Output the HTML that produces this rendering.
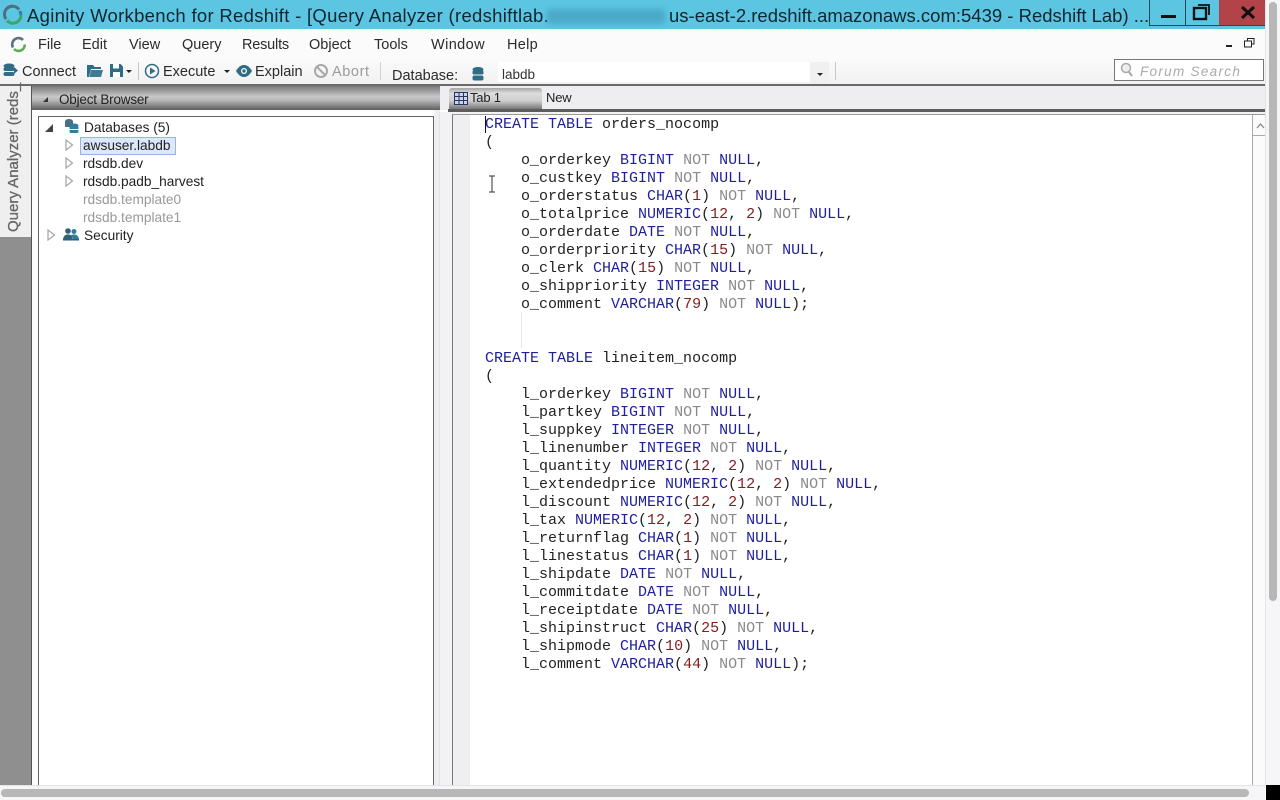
<!DOCTYPE html>
<html><head><meta charset="utf-8">
<style>
html,body{margin:0;padding:0;width:1280px;height:800px;overflow:hidden;background:#fff}
body{position:relative;font-family:"Liberation Sans",sans-serif;color:#222}
.a{position:absolute}
.t{position:absolute;white-space:nowrap;line-height:18px}
.m{font-size:14.5px;color:#2b2b2b}
pre{position:absolute;left:485px;top:116px;margin:0;font:15px/18px "Liberation Mono",monospace;color:#222}
b{font-weight:normal;color:#1f1f9c}
i{font-style:normal;color:#8a8a8a}
u{text-decoration:none;color:#802020}
.tr{font-size:13.7px;color:#222}
.g{color:#999}
</style></head><body>
<!-- title bar -->
<div class="a" style="left:0;top:0;width:1280px;height:29px;background:#5cc6e2"></div>
<svg class="a" style="left:2px;top:4px" width="22" height="22" viewBox="0 0 22 22"><path d="M4 15A8 8 0 0 1 17 5.500" fill="none" stroke="#4f6f7c" stroke-width="3"/><path d="M5 16.500A8 8 0 0 0 19 11" fill="none" stroke="#3aa66a" stroke-width="3"/><path d="M18 7L19 11" stroke="#2d7fa5" stroke-width="3"/></svg>
<div class="t" style="left:27px;top:5px;font-size:18.500px;line-height:22px;color:#102530;letter-spacing:.3px">Aginity Workbench for Redshift - [Query Analyzer (redshiftlab.</div>
<div class="a" style="left:547px;top:9px;width:118px;height:15px;background:#4aa9c8;filter:blur(3px)"></div>
<div class="t" style="left:669px;top:5px;font-size:18.500px;line-height:22px;color:#102530">us-east-2.redshift.amazonaws.com:5439 - Redshift Lab) ...</div>
<div class="a" style="left:1149px;top:0;width:1px;height:25px;background:#1e4a5a"></div>
<div class="a" style="left:1185px;top:0;width:1px;height:25px;background:#1e4a5a"></div>
<div class="a" style="left:1219px;top:0;width:46px;height:25px;background:#b24349"></div>
<div class="a" style="left:1149px;top:25px;width:116px;height:1px;background:#1e4a5a"></div>
<div class="a" style="left:1161px;top:15px;width:15px;height:3px;background:#111"></div>
<svg class="a" style="left:1192px;top:3px" width="20" height="18" viewBox="0 0 20 18"><rect x="2" y="5" width="12" height="11" fill="none" stroke="#111" stroke-width="2.400"/><path d="M6 2H17V12" fill="none" stroke="#111" stroke-width="1.800"/></svg>
<svg class="a" style="left:1240px;top:5px" width="16" height="15" viewBox="0 0 16 15"><path d="M2 2L14 13M14 2L2 13" stroke="#111" stroke-width="3"/></svg>
<!-- menu -->
<div class="a" style="left:0;top:29px;width:1265px;height:29px;background:#fbfbfb"></div>
<svg class="a" style="left:10px;top:36px" width="17" height="17" viewBox="0 0 17 17"><path d="M3 11.500A6.300 6.300 0 0 1 13 4" fill="none" stroke="#5a7580" stroke-width="2.600"/><path d="M4 13A6.300 6.300 0 0 0 14.800 8.500" fill="none" stroke="#55b04a" stroke-width="2.600"/></svg>
<div class="t m" style="left:38px;top:36px">File</div>
<div class="t m" style="left:82px;top:36px">Edit</div>
<div class="t m" style="left:129px;top:36px">View</div>
<div class="t m" style="left:182px;top:36px">Query</div>
<div class="t m" style="left:242px;top:36px;letter-spacing:-.2px">Results</div>
<div class="t m" style="left:309px;top:36px">Object</div>
<div class="t m" style="left:374px;top:36px">Tools</div>
<div class="t m" style="left:431px;top:36px;letter-spacing:.4px">Window</div>
<div class="t m" style="left:507px;top:36px;letter-spacing:.3px">Help</div>
<div class="a" style="left:1226px;top:45px;width:6px;height:2px;background:#222"></div>
<svg class="a" style="left:1244px;top:38px" width="11" height="10" viewBox="0 0 11 10"><path d="M3.500 2.500V.5H10V6H8M.5 3H7.500V9H.5Z" fill="none" stroke="#222" stroke-width="1"/></svg>
<!-- toolbar -->
<div class="a" style="left:0;top:58px;width:1265px;height:26px;background:linear-gradient(#fbfbfb,#f1f1f1)"></div>
<svg class="a" style="left:3px;top:63px" width="16" height="15" viewBox="0 0 16 15"><ellipse cx="6" cy="3" rx="5.500" ry="2.500" fill="#2f6d86"/><rect x=".5" y="4.500" width="11" height="3.500" rx="1.500" fill="#2f6d86"/><rect x=".5" y="9" width="11" height="4" rx="2" fill="#2f6d86"/><path d="M11 4L15 7.500L11 11Z" fill="#2f6d86"/></svg>
<div class="t m" style="left:22px;top:63px">Connect</div>
<svg class="a" style="left:87px;top:64px" width="16" height="13" viewBox="0 0 16 13"><path d="M0 1H6L7.500 3H14V5H4L2 13H0Z" fill="#2f6d86"/><path d="M4 6H16L14 13H2.500Z" fill="#3c7b94"/></svg>
<svg class="a" style="left:110px;top:64px" width="13" height="13" viewBox="0 0 13 13"><path d="M0 0H10.500L13 2.500V13H0Z" fill="#2f6d86"/><rect x="3" y="0" width="6" height="4.500" fill="#fff"/><rect x="3" y="8" width="7" height="5" fill="#fff"/></svg>
<div class="a" style="left:126px;top:70px;border:3px solid transparent;border-top:3px solid #222"></div>
<div class="a" style="left:138px;top:62px;width:1px;height:18px;background:#c8c8c8"></div>
<svg class="a" style="left:144px;top:63px" width="16" height="16" viewBox="0 0 16 16"><circle cx="8" cy="8" r="6.500" fill="none" stroke="#2f6d86" stroke-width="1.500"/><path d="M6 4.500L11.500 8L6 11.500Z" fill="#2f6d86"/></svg>
<div class="t m" style="left:163px;top:63px">Execute</div>
<div class="a" style="left:224px;top:70px;border:3px solid transparent;border-top:3px solid #222"></div>
<svg class="a" style="left:236px;top:65px" width="16" height="12" viewBox="0 0 16 12"><path d="M0 6C3 1 5.500 0 8 0S13 1 16 6C13 11 10.500 12 8 12S3 11 0 6Z" fill="#2f6d86"/><circle cx="8" cy="6" r="3" fill="#fff"/><circle cx="8" cy="6" r="1.700" fill="#2f6d86"/></svg>
<div class="t m" style="left:255px;top:63px">Explain</div>
<svg class="a" style="left:313px;top:63px" width="16" height="16" viewBox="0 0 16 16"><circle cx="8" cy="8" r="6" fill="none" stroke="#a8a8a8" stroke-width="2"/><path d="M4 4L12 12" stroke="#a8a8a8" stroke-width="2"/></svg>
<div class="t m" style="left:332px;top:63px;color:#9a9a9a;letter-spacing:.6px">Abort</div>
<div class="a" style="left:380px;top:62px;width:1px;height:18px;background:#d0d0d0"></div>
<div class="t m" style="left:392px;top:67px">Database:</div>
<svg class="a" style="left:472px;top:67px" width="12" height="14" viewBox="0 0 12 14"><ellipse cx="6" cy="2.500" rx="5.500" ry="2.500" fill="#2f6d86"/><rect x=".5" y="3.500" width="11" height="4" rx="1.500" fill="#2f6d86"/><rect x=".5" y="8.500" width="11" height="5" rx="2" fill="#2f6d86"/></svg>
<div class="a" style="left:498px;top:62px;width:313px;height:20px;background:#fff"></div>
<div class="t" style="left:502px;top:66px;font-size:13.500px;color:#333">labdb</div>
<div class="a" style="left:810px;top:62px;width:19px;height:21px;background:#f0f0f0"></div>
<div class="a" style="left:817px;top:73px;border:3px solid transparent;border-top:3px solid #222"></div>
<div class="a" style="left:835px;top:62px;width:1px;height:18px;background:#c8c8c8"></div>
<div class="a" style="left:1114px;top:59px;width:148px;height:20px;border:1px solid #777;background:#fff"></div>
<svg class="a" style="left:1120px;top:62px" width="14" height="15" viewBox="0 0 14 15"><circle cx="6" cy="6" r="4.500" fill="#eee" stroke="#aaa" stroke-width="1.500"/><path d="M9 10L12 14" stroke="#aaa" stroke-width="2"/></svg>
<div class="t" style="left:1140px;top:63px;font-size:13.500px;font-style:italic;color:#aaa;letter-spacing:1.300px">Forum Search</div>
<!-- main dark line -->
<div class="a" style="left:0;top:84px;width:1265px;height:2px;background:#6a6a6a"></div>
<!-- left side -->
<div class="a" style="left:0;top:86px;width:31px;height:699px;background:#8f8f8f"></div>
<div class="a" style="left:0;top:86px;width:31px;height:151px;background:#efefef"></div>
<div class="a" style="left:31px;top:86px;width:1px;height:699px;background:#555"></div>
<div class="a" style="left:-56px;top:153px;width:140px;height:18px;transform:rotate(-90deg);font-size:15px;line-height:18px;color:#666;white-space:nowrap;text-align:left;-webkit-text-stroke:.3px #666">Query Analyzer (reds_</div>
<!-- object browser -->
<div class="a" style="left:32px;top:86px;width:408px;height:24px;background:linear-gradient(#777,#c9c9c9 45%,#b5b5b5 60%,#5f5f5f)"></div>
<div class="a" style="left:43px;top:97px;border-left:5px solid transparent;border-bottom:5px solid #333"></div>
<div class="t" style="left:59px;top:91px;font-size:13.500px;letter-spacing:-.2px;color:#222">Object Browser</div>
<div class="a" style="left:32px;top:110px;width:408px;height:675px;background:#fdfdfd"></div>
<div class="a" style="left:38px;top:116px;width:394px;height:669px;border:1px solid #666;border-bottom:0;background:#fff"></div>
<div class="a" style="left:434px;top:110px;width:6px;height:675px;background:#eeedf0"></div>
<div class="a" style="left:45px;top:124px;border-left:8px solid transparent;border-bottom:8px solid #444"></div>
<svg class="a" style="left:64px;top:119px" width="15" height="15" viewBox="0 0 15 15"><ellipse cx="5" cy="2.500" rx="4" ry="2.500" fill="#4d6d80"/><rect x="1" y="3" width="8" height="5" fill="#4d6d80"/><ellipse cx="10" cy="6.500" rx="4.500" ry="2" fill="#2f7f9c"/><rect x="5.500" y="7" width="9" height="7" rx="1.500" fill="#2f7f9c"/><path d="M5.500 10.500H14.500" stroke="#fff"/></svg>
<div class="t tr" style="left:84px;top:119px">Databases (5)</div>
<div class="a" style="left:80px;top:137px;width:94px;height:16px;border:1px solid #98b4e0;background:#dce7f8"></div>
<div class="t tr" style="left:83px;top:137px">awsuser.labdb</div>
<svg class="a" style="left:65px;top:139px" width="9" height="12" viewBox="0 0 9 12"><path d="M1 1L7.500 6L1 11Z" fill="#fff" stroke="#aaa" stroke-width="1.300"/></svg>
<svg class="a" style="left:65px;top:157px" width="9" height="12" viewBox="0 0 9 12"><path d="M1 1L7.500 6L1 11Z" fill="#fff" stroke="#aaa" stroke-width="1.300"/></svg>
<div class="t tr" style="left:83px;top:155px">rdsdb.dev</div>
<svg class="a" style="left:65px;top:175px" width="9" height="12" viewBox="0 0 9 12"><path d="M1 1L7.500 6L1 11Z" fill="#fff" stroke="#aaa" stroke-width="1.300"/></svg>
<div class="t tr" style="left:83px;top:173px">rdsdb.padb_harvest</div>
<div class="t tr g" style="left:83px;top:191px">rdsdb.template0</div>
<div class="t tr g" style="left:83px;top:209px">rdsdb.template1</div>
<svg class="a" style="left:47px;top:229px" width="9" height="12" viewBox="0 0 9 12"><path d="M1 1L7.500 6L1 11Z" fill="#fff" stroke="#aaa" stroke-width="1.300"/></svg>
<svg class="a" style="left:63px;top:228px" width="16" height="13" viewBox="0 0 16 13"><circle cx="5" cy="3" r="2.800" fill="#2f5f7a"/><circle cx="11" cy="3.500" r="2.500" fill="#2f7f9c"/><path d="M0 11C1 7 3 6.500 5 6.500S9 7 9.500 11Z" fill="#2f5f7a"/><path d="M8 7C9 6.500 10 6.500 11 6.500C13 6.500 15 7 16 11H10Z" fill="#2f7f9c"/><rect x="0" y="11" width="16" height="1.500" fill="#2f5f7a"/></svg>
<div class="t tr" style="left:84px;top:227px">Security</div>
<!-- tabs -->
<div class="a" style="left:440px;top:86px;width:825px;height:24px;background:#eeedf0"></div>
<div class="a" style="left:449px;top:88px;width:93px;height:21px;background:linear-gradient(#a5a5a5,#dcdcdc 25%,#cfcfcf 60%,#777);border-radius:3px 3px 0 0"></div>
<svg class="a" style="left:454px;top:92px" width="14" height="13" viewBox="0 0 14 13"><rect x=".5" y=".5" width="13" height="12" fill="#c9d4ea" stroke="#26345f"/><path d="M.5 4.500H13.500M.5 8.500H13.500M5 .5V12.500M9.500 .5V12.500" stroke="#26345f"/></svg>
<div class="t" style="left:470px;top:89px;font-size:13px;letter-spacing:-.2px;color:#222">Tab 1</div>
<div class="t" style="left:546px;top:89px;font-size:13px;letter-spacing:-.2px;color:#222">New</div>
<div class="a" style="left:448px;top:109px;width:817px;height:3px;background:#5d5d5f"></div>
<!-- editor -->
<div class="a" style="left:440px;top:112px;width:825px;height:673px;background:#f2f1f4"></div>
<div class="a" style="left:439px;top:112px;width:1px;height:673px;background:#e2e2e6"></div>
<div class="a" style="left:452px;top:114px;width:812px;height:671px;background:#fff;border-left:1px solid #777;border-top:1px solid #999"></div>
<div class="a" style="left:453px;top:115px;width:17px;height:670px;background:#efeff1"></div>
<div class="a" style="left:521px;top:312px;width:1px;height:36px;background:#e8e8e8"></div>
<div class="a" style="left:485px;top:116px;width:1px;height:17px;background:#111"></div>
<pre><b>CREATE</b> <b>TABLE</b> orders_nocomp
(
    o_orderkey <b>BIGINT</b> <i>NOT</i> <b>NULL</b>,
    o_custkey <b>BIGINT</b> <i>NOT</i> <b>NULL</b>,
    o_orderstatus <b>CHAR</b>(<u>1</u>) <i>NOT</i> <b>NULL</b>,
    o_totalprice <b>NUMERIC</b>(<u>12</u>, <u>2</u>) <i>NOT</i> <b>NULL</b>,
    o_orderdate <b>DATE</b> <i>NOT</i> <b>NULL</b>,
    o_orderpriority <b>CHAR</b>(<u>15</u>) <i>NOT</i> <b>NULL</b>,
    o_clerk <b>CHAR</b>(<u>15</u>) <i>NOT</i> <b>NULL</b>,
    o_shippriority <b>INTEGER</b> <i>NOT</i> <b>NULL</b>,
    o_comment <b>VARCHAR</b>(<u>79</u>) <i>NOT</i> <b>NULL</b>);


<b>CREATE</b> <b>TABLE</b> lineitem_nocomp
(
    l_orderkey <b>BIGINT</b> <i>NOT</i> <b>NULL</b>,
    l_partkey <b>BIGINT</b> <i>NOT</i> <b>NULL</b>,
    l_suppkey <b>INTEGER</b> <i>NOT</i> <b>NULL</b>,
    l_linenumber <b>INTEGER</b> <i>NOT</i> <b>NULL</b>,
    l_quantity <b>NUMERIC</b>(<u>12</u>, <u>2</u>) <i>NOT</i> <b>NULL</b>,
    l_extendedprice <b>NUMERIC</b>(<u>12</u>, <u>2</u>) <i>NOT</i> <b>NULL</b>,
    l_discount <b>NUMERIC</b>(<u>12</u>, <u>2</u>) <i>NOT</i> <b>NULL</b>,
    l_tax <b>NUMERIC</b>(<u>12</u>, <u>2</u>) <i>NOT</i> <b>NULL</b>,
    l_returnflag <b>CHAR</b>(<u>1</u>) <i>NOT</i> <b>NULL</b>,
    l_linestatus <b>CHAR</b>(<u>1</u>) <i>NOT</i> <b>NULL</b>,
    l_shipdate <b>DATE</b> <i>NOT</i> <b>NULL</b>,
    l_commitdate <b>DATE</b> <i>NOT</i> <b>NULL</b>,
    l_receiptdate <b>DATE</b> <i>NOT</i> <b>NULL</b>,
    l_shipinstruct <b>CHAR</b>(<u>25</u>) <i>NOT</i> <b>NULL</b>,
    l_shipmode <b>CHAR</b>(<u>10</u>) <i>NOT</i> <b>NULL</b>,
    l_comment <b>VARCHAR</b>(<u>44</u>) <i>NOT</i> <b>NULL</b>);</pre>
<!-- I-beam cursor -->
<svg class="a" style="left:488px;top:175px" width="8" height="18" viewBox="0 0 8 18"><path d="M1 1H7M4 1V17M1 17H7" fill="none" stroke="#333" stroke-width="1"/></svg>
<!-- editor scrollbar -->
<div class="a" style="left:1252px;top:115px;width:1px;height:670px;background:#aaa"></div>
<div class="a" style="left:1253px;top:115px;width:12px;height:670px;background:#fbfbfb"></div>
<div class="a" style="left:1253px;top:135px;width:12px;height:1px;background:#aaa"></div>
<svg class="a" style="left:1256px;top:122px" width="9" height="7" viewBox="0 0 9 7"><path d="M1 6L4.500 2L8 6" fill="none" stroke="#888" stroke-width="1.300"/></svg>
<!-- outer scrollbars -->
<div class="a" style="left:1265px;top:0;width:15px;height:785px;background:#f6f5f8;border-left:1px solid #e4e4e4;box-sizing:border-box"></div>
<div class="a" style="left:1269px;top:2px;width:8px;height:599px;background:#b7b7b7;border-radius:4px"></div>
<div class="a" style="left:0;top:785px;width:1265px;height:15px;background:#f6f5f8;border-top:1px solid #e4e4e4;box-sizing:border-box"></div>
<div class="a" style="left:1px;top:789px;width:1248px;height:8px;background:#b7b7b7;border-radius:4px"></div>
<div class="a" style="left:1266px;top:785px;width:14px;height:15px;background:#000"></div>
</body></html>
